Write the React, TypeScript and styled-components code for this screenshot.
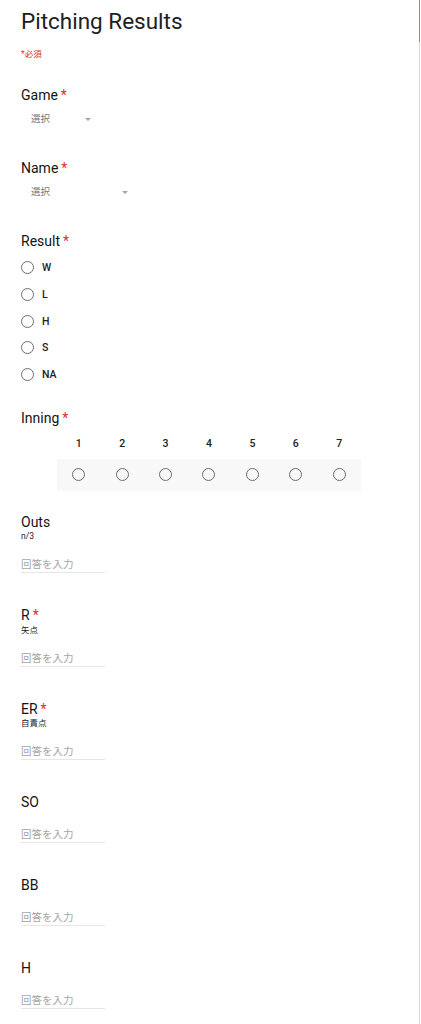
import React from 'react';
import styled, { createGlobalStyle } from 'styled-components';

const GlobalStyle = createGlobalStyle`
  html, body {
    margin: 0;
    padding: 0;
    background: #fff;
  }
  body {
    font-family: Roboto, "Noto Sans CJK JP", sans-serif;
    color: #202124;
  }
`;

const Page = styled.div`
  position: relative;
  width: 420px;
  min-height: 1024px;
  box-sizing: border-box;
  padding: 5px 0 0 21px;
  border-right: 1px solid #d9d9dc;

  &::after {
    content: '';
    position: absolute;
    top: 0;
    right: -1px;
    width: 1px;
    height: 42px;
    background: #9a80cc;
  }
`;

const Title = styled.h1`
  margin: 0;
  font-size: 22.5px;
  line-height: 32px;
  font-weight: 400;
  color: #202124;
`;

const RequiredNote = styled.div`
  margin-top: 10px;
  font-size: 8.5px;
  line-height: 14px;
  color: #d93025;
`;

const Form = styled.div`
  margin-top: 24px;
  display: flex;
  flex-direction: column;
`;

const Question = styled.section<{ $space?: number }>`
  margin-bottom: ${(p) => p.$space ?? 32}px;
`;

const Label = styled.div`
  font-size: 14px;
  line-height: 20px;
  font-weight: 400;
  color: #141414;
`;

const Star = styled.span`
  color: #d93025;
  margin-left: 3px;
`;

const Description = styled.div`
  margin-top: -1.5px;
  font-size: 8.5px;
  line-height: 12px;
  color: #202124;
`;

const Select = styled.div<{ $width: number }>`
  margin-top: 7px;
  width: ${(p) => p.$width}px;
  box-sizing: border-box;
  padding-left: 10px;
  display: flex;
  align-items: center;
  justify-content: space-between;
  font-size: 9.5px;
  line-height: 14px;
  color: #777;
`;

const Caret = styled.span`
  width: 0;
  height: 0;
  border-left: 3.5px solid transparent;
  border-right: 3.5px solid transparent;
  border-top: 3.5px solid #a5a5a5;
`;

const RadioList = styled.div`
  margin-top: 3.5px;
  display: flex;
  flex-direction: column;
`;

const RadioRow = styled.label`
  height: 26.7px;
  display: flex;
  align-items: center;
  gap: 8px;
  font-size: 10.5px;
  font-weight: 500;
  color: #202124;
`;

const Circle = styled.span`
  width: 13px;
  height: 13px;
  box-sizing: border-box;
  border-radius: 50%;
  border: 1.5px solid #6e6e6e;
  flex-shrink: 0;
`;

const Scale = styled.div`
  margin-left: 36px;
  width: 304px;
`;

const ScaleRow = styled.div<{ $shaded?: boolean }>`
  display: grid;
  grid-template-columns: repeat(7, 1fr);
  height: ${(p) => (p.$shaded ? 32 : 31)}px;
  align-items: center;
  justify-items: center;
  background: ${(p) => (p.$shaded ? '#f8f8f8' : 'transparent')};
  font-size: 10.5px;
  font-weight: 500;
  color: #202124;
`;

const TextInput = styled.div`
  margin-top: 16px;
  width: 84px;
  font-size: 10.5px;
  line-height: 14px;
  color: #a6a6a6;
  border-bottom: 1px solid #e6e6e6;
  white-space: nowrap;
`;

const results = ['W', 'L', 'H', 'S', 'NA'];
const innings = [1, 2, 3, 4, 5, 6, 7];

const textQuestions: { name: string; desc?: string; required?: boolean }[] = [
  { name: 'Outs', desc: 'n/3' },
  { name: 'R', desc: '矢点', required: true },
  { name: 'ER', desc: '自責点', required: true },
  { name: 'SO' },
  { name: 'BB' },
  { name: 'H' },
];

function App() {
  return (
    <>
      <GlobalStyle />
      <Page>
        <Title>Pitching Results</Title>
        <RequiredNote>*必須</RequiredNote>
        <Form>
          <Question>
            <Label>
              Game<Star>*</Star>
            </Label>
            <Select $width={70}>
              選択
              <Caret />
            </Select>
          </Question>

          <Question>
            <Label>
              Name<Star>*</Star>
            </Label>
            <Select $width={107}>
              選択
              <Caret />
            </Select>
          </Question>

          <Question $space={20}>
            <Label>
              Result<Star>*</Star>
            </Label>
            <RadioList>
              {results.map((r) => (
                <RadioRow key={r}>
                  <Circle />
                  {r}
                </RadioRow>
              ))}
            </RadioList>
          </Question>

          <Question $space={21}>
            <Label>
              Inning<Star>*</Star>
            </Label>
            <Scale>
              <ScaleRow>
                {innings.map((n) => (
                  <span key={n}>{n}</span>
                ))}
              </ScaleRow>
              <ScaleRow $shaded>
                {innings.map((n) => (
                  <Circle key={n} />
                ))}
              </ScaleRow>
            </Scale>
          </Question>

          {textQuestions.map((q) => (
            <Question key={q.name}>
              <Label>
                {q.name}
                {q.required && <Star>*</Star>}
              </Label>
              {q.desc && <Description>{q.desc}</Description>}
              <TextInput>回答を入力</TextInput>
            </Question>
          ))}
        </Form>
      </Page>
    </>
  );
}

export default App;
